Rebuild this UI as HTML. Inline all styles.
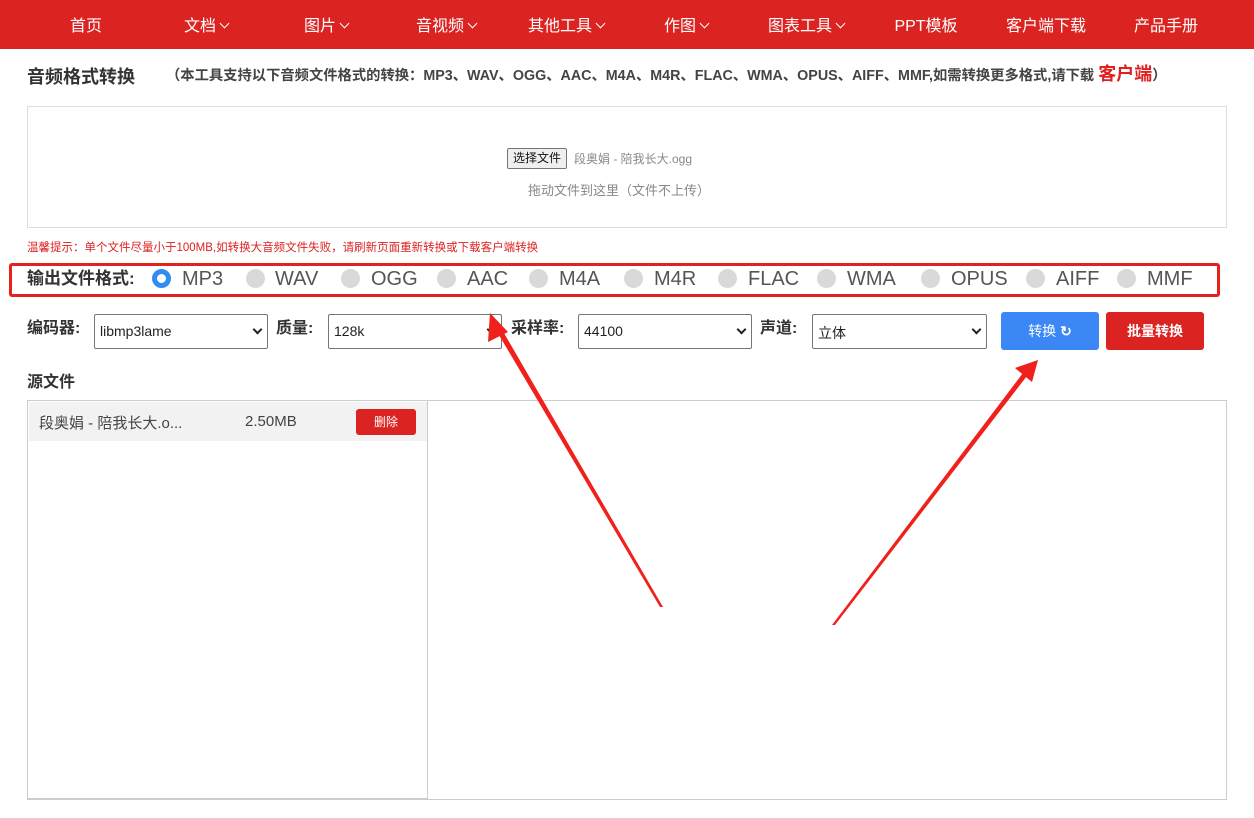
<!DOCTYPE html>
<html><head><meta charset="utf-8"><style>
*{margin:0;padding:0;box-sizing:border-box}
body{width:1254px;height:818px;background:#fff;font-family:"Liberation Sans","Noto Sans CJK SC",sans-serif;position:relative;overflow:hidden;color:#333}
.nav{position:absolute;left:0;top:0;width:1254px;height:49px;background:#db2421}
.nav span{position:absolute;top:2px;line-height:49px;color:#fff;font-size:16px;transform:translateX(-50%);white-space:nowrap}
.chev{display:inline-block;width:7px;height:7px;border-right:1.6px solid #fff;border-bottom:1.6px solid #fff;transform:rotate(45deg);margin-left:5px;position:relative;top:-4px}
.abs{position:absolute;white-space:nowrap}
.radio{position:absolute;top:269px;width:19px;height:19px;border-radius:50%;background:#d9d9d9}
.rl{position:absolute;top:269px;font-size:20px;line-height:20px;color:#555}
.sel{position:absolute;top:314px;height:35px;border:1px solid #767676;border-radius:2px;background:#fff;font-size:14px;color:#222;padding:8px 5px}
.sel i{position:absolute;right:6px;top:11px;width:7px;height:7px;border-right:2px solid #222;border-bottom:2px solid #222;transform:rotate(45deg)}
.lab{position:absolute;top:320px;font-size:16px;line-height:18px;font-weight:bold;color:#333}
</style></head><body>
<div class="nav">
<span style="left:86px">首页</span>
<span style="left:206px">文档<i class="chev"></i></span>
<span style="left:326px">图片<i class="chev"></i></span>
<span style="left:446px">音视频<i class="chev"></i></span>
<span style="left:566px">其他工具<i class="chev"></i></span>
<span style="left:686px">作图<i class="chev"></i></span>
<span style="left:806px">图表工具<i class="chev"></i></span>
<span style="left:926px">PPT模板</span>
<span style="left:1046px">客户端下载</span>
<span style="left:1166px">产品手册</span>
</div>
<div class="abs" style="left:27px;top:63px;font-size:18px;font-weight:bold;color:#333">音频格式转换</div>
<div class="abs" style="left:166px;top:62px;font-size:14.3px;line-height:24px;font-weight:bold;color:#444">（本工具支持以下音频文件格式的转换：MP3、WAV、OGG、AAC、M4A、M4R、FLAC、WMA、OPUS、AIFF、MMF,如需转换更多格式,请下载 <span style="color:#e02020;font-size:18px">客户端</span>）</div>
<div class="abs" style="left:27px;top:106px;width:1200px;height:122px;border:1px solid #ddd"></div>
<div class="abs" style="left:507px;top:148px;height:21px;padding:0 5px;border:1px solid #767676;background:#efefef;border-radius:2px;font-size:12px;line-height:19px;color:#111">选择文件</div>
<div class="abs" style="left:574px;top:150px;font-size:12px;color:#888">段奥娟 - 陪我长大.ogg</div>
<div class="abs" style="left:528px;top:180px;font-size:13px;color:#888">拖动文件到这里（文件不上传）</div>
<div class="abs" style="left:27px;top:239px;font-size:11.5px;color:#d22">温馨提示：单个文件尽量小于100MB,如转换大音频文件失败，请刷新页面重新转换或下载客户端转换</div>
<div class="abs" style="left:9px;top:263px;width:1211px;height:34px;border:3px solid #e5211c;border-radius:3px"></div>
<div class="abs" style="left:27px;top:269px;font-size:17px;line-height:20px;font-weight:bold;color:#333">输出文件格式:</div>
<div class="radio" style="left:152px;background:#fff;border:5px solid #2f8ef0"></div><div class="rl" style="left:182px">MP3</div>
<div class="radio" style="left:246px"></div><div class="rl" style="left:275px">WAV</div>
<div class="radio" style="left:341px"></div><div class="rl" style="left:371px">OGG</div>
<div class="radio" style="left:437px"></div><div class="rl" style="left:467px">AAC</div>
<div class="radio" style="left:529px"></div><div class="rl" style="left:559px">M4A</div>
<div class="radio" style="left:624px"></div><div class="rl" style="left:654px">M4R</div>
<div class="radio" style="left:718px"></div><div class="rl" style="left:748px">FLAC</div>
<div class="radio" style="left:817px"></div><div class="rl" style="left:847px">WMA</div>
<div class="radio" style="left:921px"></div><div class="rl" style="left:951px">OPUS</div>
<div class="radio" style="left:1026px"></div><div class="rl" style="left:1056px">AIFF</div>
<div class="radio" style="left:1117px"></div><div class="rl" style="left:1147px">MMF</div>
<div class="lab" style="left:27px">编码器:</div>
<div class="sel" style="left:94px;width:174px">libmp3lame<i></i></div>
<div class="lab" style="left:276px">质量:</div>
<div class="sel" style="left:328px;width:174px">128k<i></i></div>
<div class="lab" style="left:511px">采样率:</div>
<div class="sel" style="left:578px;width:174px">44100<i></i></div>
<div class="lab" style="left:760px">声道:</div>
<div class="sel" style="left:812px;width:175px">立体<i></i></div>
<div class="abs" style="left:1001px;top:312px;width:98px;height:38px;background:#3a87f5;border-radius:3px;color:#fff;font-size:14px;line-height:38px;text-align:center">转换 <b>↻</b></div>
<div class="abs" style="left:1106px;top:312px;width:98px;height:38px;background:#db2421;border-radius:3px;color:#fff;font-size:14px;font-weight:bold;line-height:38px;text-align:center">批量转换</div>
<div class="abs" style="left:27px;top:374px;font-size:16px;line-height:18px;font-weight:bold;color:#333">源文件</div>
<div class="abs" style="left:27px;top:400px;width:1200px;height:400px;border:1px solid #ccc"></div>
<div class="abs" style="left:27px;top:400px;width:401px;height:400px;border:1px solid #ccc;border-bottom:2px solid #ccc"></div>
<div class="abs" style="left:29px;top:402px;width:398px;height:39px;background:#f2f2f2"></div>
<div class="abs" style="left:39px;top:412px;font-size:15px;color:#444">段奥娟 - 陪我长大.o...</div>
<div class="abs" style="left:245px;top:413px;font-size:15px;color:#444">2.50MB</div>
<div class="abs" style="left:356px;top:409px;width:60px;height:26px;background:#db2421;border-radius:3px;color:#fff;font-size:12px;line-height:26px;text-align:center">删除</div>
<svg class="abs" style="left:0;top:0" width="1254" height="818">
<polygon points="663,607 660,607 496,330 501,328" fill="#f0201c"/>
<polygon points="490,313 488,342 508,332" fill="#f0201c"/>
<polygon points="832,625 835,625 1030,372 1026,369" fill="#f0201c"/>
<polygon points="1038,360 1015,368 1032,382" fill="#f0201c"/>
</svg>
</body></html>
